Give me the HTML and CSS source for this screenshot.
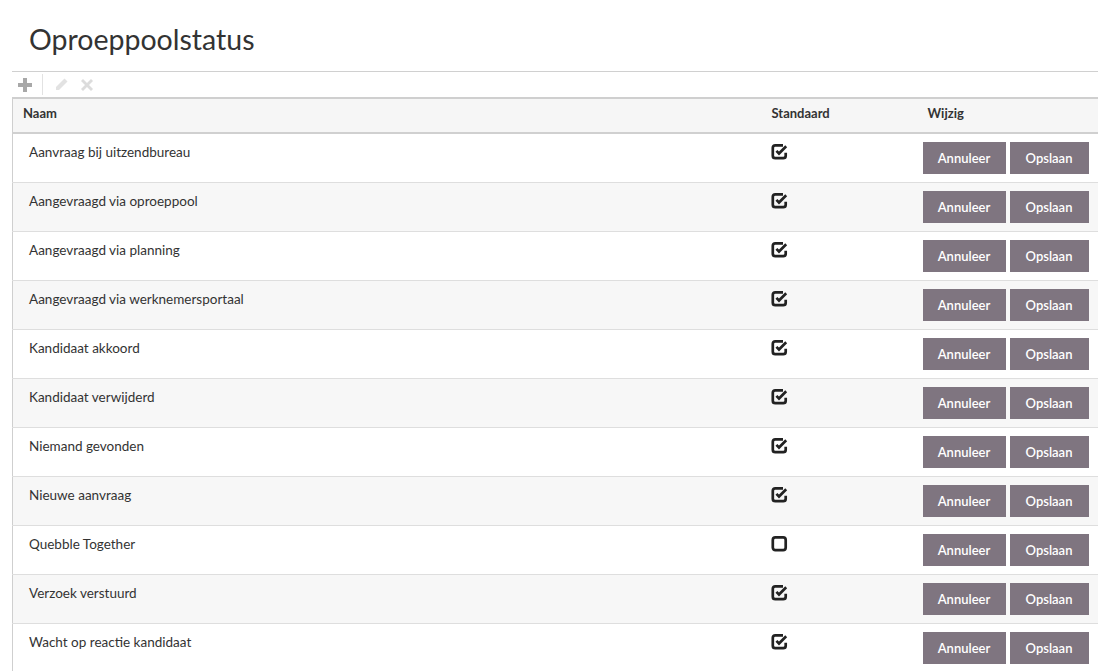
FILE: index.html
```html
<!DOCTYPE html>
<html>
<head>
<meta charset="utf-8">
<link rel="stylesheet" href="styles.css">
</head>
<body>
<div class="page">
  <h1 class="title">Oproeppoolstatus</h1>
  <div class="toolbar">
    <span class="tb-btn">
      <svg width="14" height="14" viewBox="0 0 14 14"><path d="M5 0h4v5h5v4H9v5H5V9H0V5h5z" fill="#a8a8a8"/></svg>
    </span>
    <span class="tb-sep"></span>
    <span class="tb-btn">
      <svg width="13" height="13" viewBox="0 0 13 13"><path d="M9.5 0.5l3 3L4 12H1V9z" fill="#e2e2e2"/></svg>
    </span>
    <span class="tb-btn">
      <svg width="12" height="12" viewBox="0 0 12 12"><path d="M2 0l4 4 4-4 2 2-4 4 4 4-2 2-4-4-4 4-2-2 4-4-4-4z" fill="#dcdcdc"/></svg>
    </span>
  </div>
  <table class="grid">
    <colgroup><col class="col-name"><col class="col-std"><col class="col-edit"></colgroup>
    <thead>
      <tr><th class="c-name">Naam</th><th class="c-std">Standaard</th><th class="c-edit">Wijzig</th></tr>
    </thead>
    <tbody id="rows"></tbody>
  </table>
</div>
<script>
var names=[["Aanvraag bij uitzendbureau",1],["Aangevraagd via oproeppool",1],["Aangevraagd via planning",1],["Aangevraagd via werknemersportaal",1],["Kandidaat akkoord",1],["Kandidaat verwijderd",1],["Niemand gevonden",1],["Nieuwe aanvraag",1],["Quebble Together",0],["Verzoek verstuurd",1],["Wacht op reactie kandidaat",1]];
var chk='<svg width="18" height="17" viewBox="0 0 18 17"><path d="M12 2.3H4.3Q1.8 2.3 1.8 4.8V12.7Q1.8 15.2 4.3 15.2H12.2Q14.7 15.2 14.7 12.7V9.8" fill="none" stroke="#222" stroke-width="2.7"/><path d="M5.4 7.9l2.6 2.6 7.2-7.2" fill="none" stroke="#222" stroke-width="2.7"/></svg>';
var box='<svg width="18" height="17" viewBox="0 0 18 17"><rect x="1.8" y="2.3" width="12.9" height="12.9" rx="2.6" fill="none" stroke="#222" stroke-width="2.7"/></svg>';
var h='';
names.forEach(function(n){h+='<tr><td class="c-name">'+n[0]+'</td><td class="c-std">'+(n[1]?chk:box)+'</td><td class="c-edit"><div class="btns"><button class="btn b1">Annuleer</button><button class="btn b2">Opslaan</button></div></td></tr>';});
document.getElementById('rows').innerHTML=h;
</script>
</body>
</html>
```
FILE: styles.css
```css
html,body{margin:0;padding:0;background:#fff;}
body{font-family:"Lato","Noto Sans",sans-serif;color:#333;}
.page{padding-left:12px;}
.title{margin:0;padding:21px 0 14px 17px;font-weight:400;font-size:28.5px;line-height:36px;color:#333;}
.toolbar{border-top:1px solid #d0d0d0;height:25px;display:flex;align-items:center;padding-left:6px;}
.tb-btn{display:inline-flex;width:14px;height:14px;align-items:center;justify-content:center;margin-right:12px;}
.tb-btn:first-child{margin-right:10px;}
.tb-sep{width:1px;height:21px;background:#e2e2e2;margin-right:11px;}
.grid{width:1086px;table-layout:fixed;border-collapse:collapse;border-top:2px solid #cfcfcf;border-left:1px solid #cfcfcf;font-size:13.5px;}
.col-name{width:749px;}
.col-std{width:156px;}
.col-edit{width:181px;}
.grid th{background:#f6f6f6;text-align:left;font-weight:700;font-size:13px;height:35px;box-sizing:border-box;padding:0 10px 6px;vertical-align:middle;border-bottom:2px solid #d0d0d0;color:#333;}
.grid tbody tr{height:49px;}
.grid td{padding:0;border-bottom:1px solid #dedede;vertical-align:top;}
.grid tbody tr:nth-child(even) td{background:#f7f7f7;}
.grid td.c-name{padding:10px 16px 0;}
.grid td.c-std{padding:9px 9px 0;}
.btns{display:flex;gap:4px;padding-top:8px;padding-left:5px;}
.btn{border:0;background:#7f7580;color:#fff;font-family:"Lato","Noto Sans",sans-serif;font-size:13px;font-weight:600;height:32px;padding:0;cursor:pointer;}
.b1{width:83px;}
.b2{width:79px;}
svg{display:block;}
```
